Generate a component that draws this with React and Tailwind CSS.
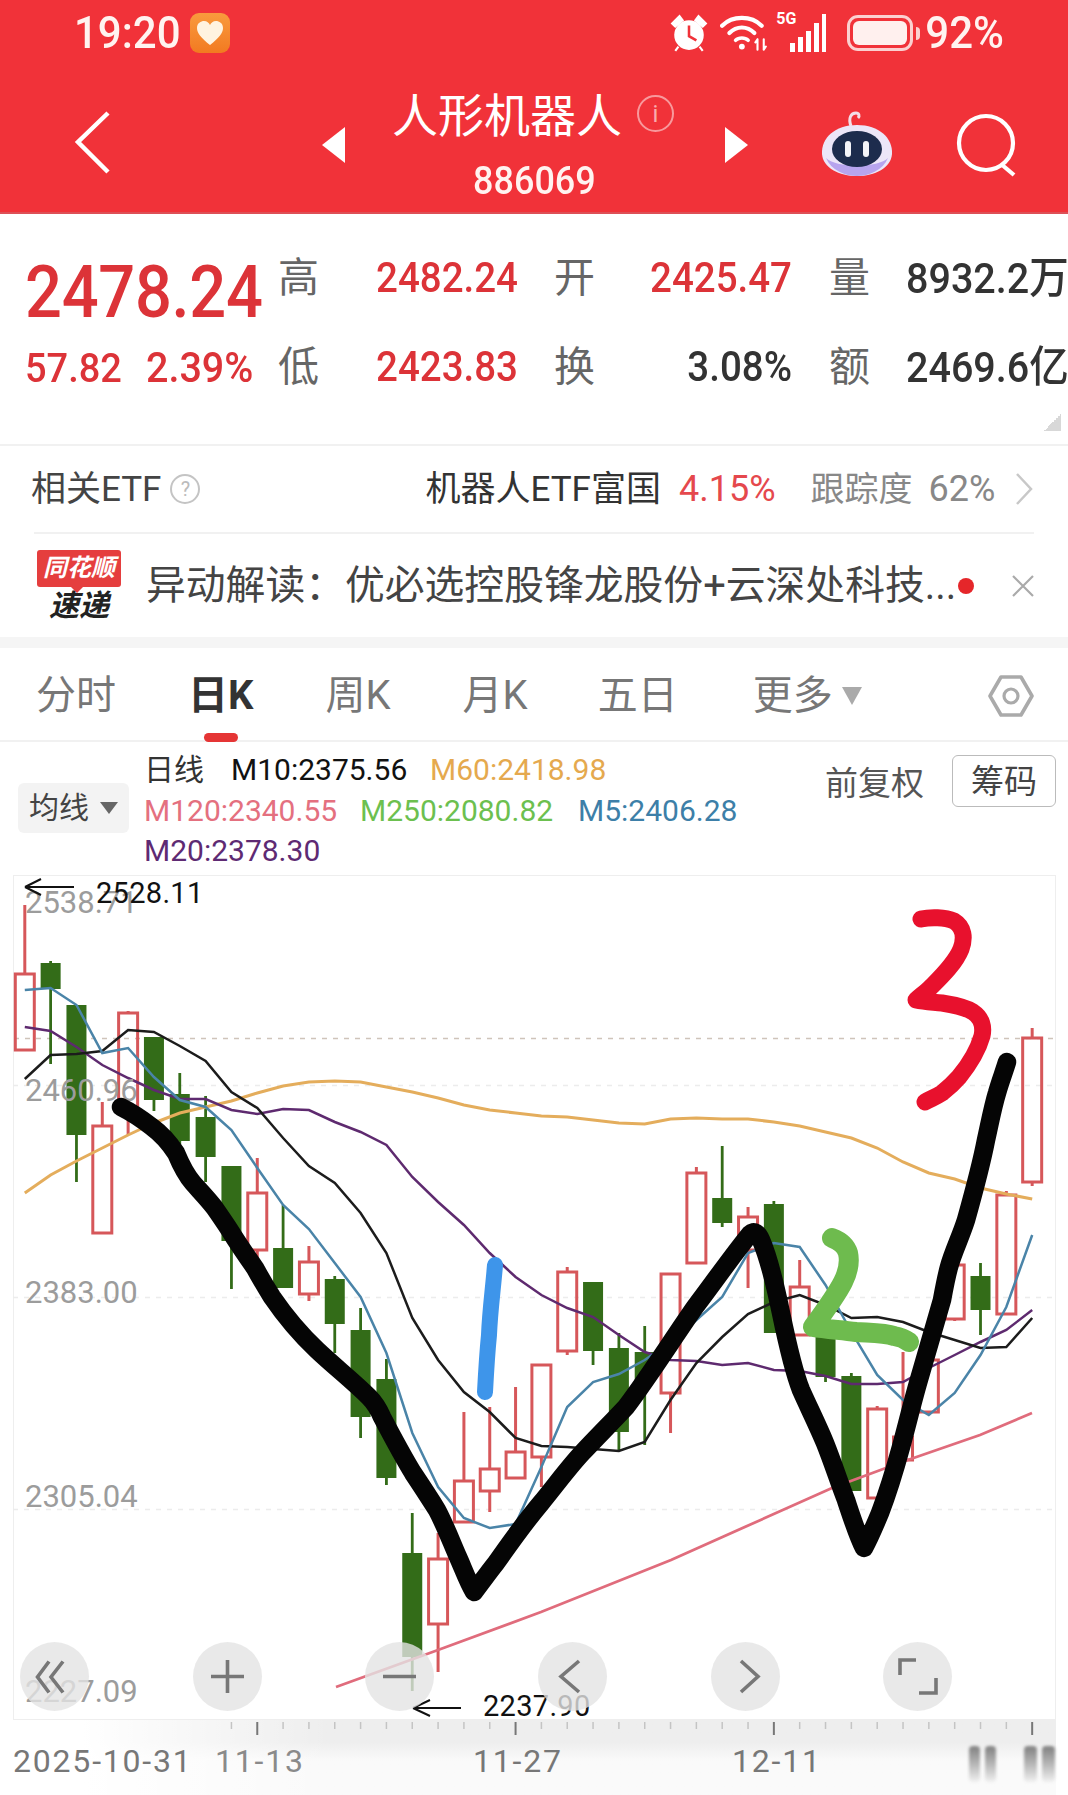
import React from "react";

const X = (i) => 24.8 + 25.83 * i;

// type, bodyTop, bodyBottom, wickTop, wickBottom
const candles = [
  ["r", 974, 1050, 905, 1050],
  ["g", 963, 989, 961, 1064],
  ["g", 1005, 1135, 1005, 1182],
  ["r", 1126, 1233, 1102, 1233],
  ["r", 1013, 1108, 1011, 1135],
  ["g", 1037, 1100, 1037, 1111],
  ["g", 1094, 1141, 1073, 1148],
  ["g", 1117, 1157, 1096, 1182],
  ["g", 1166, 1241, 1166, 1289],
  ["r", 1193, 1250, 1158, 1260],
  ["g", 1248, 1288, 1205, 1288],
  ["r", 1262, 1294, 1246, 1301],
  ["g", 1279, 1324, 1276, 1353],
  ["g", 1330, 1417, 1308, 1438],
  ["g", 1379, 1478, 1359, 1485],
  ["g", 1553, 1657, 1513, 1691],
  ["r", 1559, 1624, 1533, 1672],
  ["r", 1481, 1522, 1412, 1522],
  ["r", 1469, 1491, 1407, 1512],
  ["r", 1452, 1478, 1387, 1478],
  ["r", 1365, 1457, 1365, 1487],
  ["r", 1272, 1351, 1267, 1355],
  ["g", 1282, 1351, 1282, 1365],
  ["g", 1348, 1432, 1333, 1450],
  ["g", 1352, 1382, 1326, 1445],
  ["r", 1274, 1393, 1274, 1433],
  ["r", 1173, 1263, 1167, 1263],
  ["g", 1198, 1223, 1146, 1227],
  ["r", 1217, 1250, 1207, 1288],
  ["g", 1204, 1333, 1201, 1333],
  ["r", 1287, 1335, 1260, 1335],
  ["g", 1320, 1377, 1320, 1382],
  ["g", 1376, 1491, 1373, 1491],
  ["r", 1409, 1498, 1406, 1498],
  ["r", 1437, 1460, 1352, 1460],
  ["r", 1360, 1412, 1360, 1414],
  ["r", 1265, 1319, 1265, 1321],
  ["g", 1276, 1310, 1263, 1335],
  ["r", 1195, 1314, 1191, 1314],
  ["r", 1038, 1182, 1028, 1186],
];

const ma5 = [990, 988, 1005, 1053, 1048, 1077, 1100, 1107, 1130, 1168, 1205, 1229, 1263, 1297, 1353, 1433, 1487, 1518, 1528, 1524, 1467, 1407, 1382, 1374, 1360, 1342, 1320, 1297, 1253, 1243, 1247, 1285, 1332, 1375, 1400, 1415, 1393, 1355, 1307, 1235];
const ma10 = [1079, 1055, 1054, 1051, 1030, 1032, 1046, 1061, 1092, 1108, 1138, 1166, 1183, 1213, 1253, 1318, 1360, 1392, 1412, 1438, 1446, 1447, 1449, 1451, 1442, 1400, 1363, 1337, 1314, 1302, 1295, 1305, 1318, 1317, 1322, 1332, 1340, 1348, 1347, 1318];
const ma20 = [1027, 1031, 1047, 1065, 1078, 1090, 1099, 1099, 1110, 1114, 1109, 1110, 1122, 1132, 1145, 1177, 1202, 1225, 1253, 1277, 1295, 1308, 1317, 1335, 1352, 1360, 1361, 1365, 1363, 1370, 1371, 1376, 1384, 1384, 1382, 1368, 1355, 1342, 1330, 1310];
const ma60 = [1193, 1175, 1161, 1148, 1135, 1123, 1113, 1107, 1101, 1093, 1086, 1082, 1081, 1082, 1087, 1092, 1098, 1105, 1110, 1113, 1116, 1117, 1120, 1123, 1124, 1119, 1118, 1119, 1119, 1122, 1126, 1132, 1138, 1148, 1162, 1173, 1179, 1188, 1194, 1199];

const line = (arr) => arr.map((y, i) => `${X(i).toFixed(1)},${y}`).join(" ");

const Candles = () => (
  <svg className="absolute inset-0 w-full h-full" viewBox="0 875 1068 845">
    <line x1="13" x2="1056" y1="1085.5" y2="1085.5" stroke="#ececec" strokeWidth="1.5" strokeDasharray="5 6" />
    <line x1="13" x2="1056" y1="1297.5" y2="1297.5" stroke="#ececec" strokeWidth="1.5" strokeDasharray="5 6" />
    <line x1="13" x2="1056" y1="1509.5" y2="1509.5" stroke="#ececec" strokeWidth="1.5" strokeDasharray="5 6" />
    <line x1="14" x2="1056" y1="1038.5" y2="1038.5" stroke="#cfc4ba" strokeWidth="1.6" strokeDasharray="5 6" />
    {candles.map(([t, a, b, c, d], i) => {
      const x = X(i);
      if (t === "g") {
        return (
          <g key={i}>
            <line x1={x} x2={x} y1={c} y2={d} stroke="#336c18" strokeWidth="2.8" />
            <rect x={x - 10} y={a} width="20" height={b - a} fill="#336c18" />
          </g>
        );
      }
      return (
        <g key={i}>
          <line x1={x} x2={x} y1={c} y2={a} stroke="#d6575a" strokeWidth="3" />
          <line x1={x} x2={x} y1={b} y2={d} stroke="#d6575a" strokeWidth="3" />
          <rect x={x - 9.5} y={a} width="19" height={b - a} fill="none" stroke="#d6575a" strokeWidth="3" />
        </g>
      );
    })}
    <polyline points="336,1687 438,1650 541,1612 671,1560 832,1488 902,1462 980,1435 1032,1413" fill="none" stroke="#e06c7c" strokeWidth="2.8" />
    <polyline points={line(ma60)} fill="none" stroke="#e4ad5c" strokeWidth="3" />
    <polyline points={line(ma20)} fill="none" stroke="#5e2a6f" strokeWidth="2.5" />
    <polyline points={line(ma10)} fill="none" stroke="#1c1c1c" strokeWidth="2.5" />
    <polyline points={line(ma5)} fill="none" stroke="#4a84a8" strokeWidth="2.5" />
  </svg>
);

const Strokes = () => (
  <svg className="absolute inset-0 w-full h-full" viewBox="0 875 1068 845">
    <path d="M121 1107 C133 1113 143 1120 152 1127 C163 1135 170 1144 176 1153 C181 1165 186 1175 193 1183 C201 1192 207 1198 214 1207 C221 1217 228 1227 234 1237 C241 1248 248 1258 255 1268 C261 1279 267 1289 272 1297 C285 1316 300 1334 317 1350 C335 1367 353 1381 369 1397 C375 1403 379 1410 382 1417 C392 1436 402 1455 413 1473 C421 1485 429 1497 437 1510 C445 1525 451 1541 458 1557 C463 1568 468 1582 474 1592 C481 1583 488 1573 496 1563 C510 1543 525 1522 541 1503 C555 1486 568 1468 582 1453 C597 1437 612 1422 626 1407 C650 1375 672 1340 695 1307 C714 1282 732 1256 750 1234 C754 1230 758 1233 761 1240 C768 1256 775 1284 781 1313 C787 1342 793 1370 801 1390 C809 1408 818 1426 825 1443 C833 1463 839 1482 846 1500 C851 1515 858 1537 864 1548 C870 1537 875 1525 880 1513 C888 1492 895 1469 901 1447 C907 1425 912 1404 918 1383 C926 1355 934 1328 942 1300 C944 1289 946 1278 949 1267 C953 1252 961 1236 966 1220 C973 1195 981 1166 986 1140 C990 1122 993 1106 997 1093 C1000 1082 1004 1072 1007 1062" fill="none" stroke="#050505" strokeWidth="18.5" strokeLinecap="round" strokeLinejoin="round" />
    <path d="M495 1265 C493 1290 490 1310 489 1335 C487 1355 486 1373 485 1392" fill="none" stroke="#3e95ea" strokeWidth="16" strokeLinecap="round" />
    <path d="M921 919 C930 917 945 917 954 921 C964 927 965 938 961 949 C955 964 940 978 930 988 C925 993 920 996 916 1000 C925 1002 933 1002 942 1003 C955 1005 965 1007 973 1012 C982 1018 984 1027 982 1036 C978 1050 968 1066 959 1077 C951 1086 947 1089 942 1093 C936 1097 930 1099 925 1102" fill="none" stroke="#e8112d" strokeWidth="17" strokeLinecap="round" strokeLinejoin="round" />
    <path d="M832 1238 C840 1241 846 1246 848 1253 C850 1262 848 1272 843 1282 C837 1294 824 1312 813 1327 C825 1329 840 1330 856 1332 C870 1333 885 1333 894 1336 C900 1337 905 1339 909 1342" fill="none" stroke="#6ebb4e" strokeWidth="20" strokeLinecap="round" strokeLinejoin="round" />
    <path d="M25 887 H74 M25 887 L41 879 M25 887 L41 895" fill="none" stroke="#111" strokeWidth="2" />
    <path d="M413 1708 H461 M413 1708 L430 1700 M413 1708 L430 1716" fill="none" stroke="#111" strokeWidth="2" />
  </svg>
);

const Circle = ({ children }) => (
  <div className="w-[69px] h-[69px] rounded-full bg-[#e4e4e4]/80 shrink-0">
    <svg viewBox="0 0 69 69" className="w-[69px] h-[69px]" fill="none" stroke="#777" strokeWidth="3.6">
      {children}
    </svg>
  </div>
);

const Ticks = () => (
  <svg className="absolute inset-0 w-full h-full" viewBox="0 1720 1068 75">
    {Array.from({ length: 32 }, (_, k) => k + 8).map((i) => {
      const major = (i - 9) % 10 === 0;
      return (
        <line key={i} x1={X(i)} x2={X(i)} y1="1722" y2={major ? 1735 : 1729} stroke={major ? "#777" : "#c4c4c4"} strokeWidth={major ? 2 : 1.5} />
      );
    })}
  </svg>
);

const Wifi = () => (
  <svg width="50" height="38" viewBox="0 0 48 36" fill="none" stroke="#fff" strokeLinecap="round">
    <path d="M2 11 C12 1 30 1 40 11" strokeWidth="4" />
    <path d="M9 18 C16 11 26 11 33 18" strokeWidth="4" />
    <path d="M15 25 C18 22 24 22 27 25" strokeWidth="3.5" />
    <circle cx="21" cy="31" r="2.8" fill="#fff" stroke="none" />
    <path d="M36 24 V34 M42 24 V34 M34 27 L36 24 M44 31 L42 34" strokeWidth="2" />
  </svg>
);

export default function App() {
  return (
    <div className="w-[1068px] h-[1795px] bg-white overflow-hidden font-[Roboto,'Noto_Sans_CJK_SC',sans-serif]">
      {/* Header */}
      <header className="relative h-[214px] bg-[#f13239] border-b-2 border-[#dd5057] text-white">
        <div className="flex items-center h-[66px] pl-[74px] pr-[64px]">
          <span className="text-[42px] leading-none font-medium text-[#fff3f0] scale-y-[1.06]">19:20</span>
          <div className="ml-[9px] w-[40px] h-[40px] rounded-[9px] bg-gradient-to-b from-[#f99a3d] to-[#f27a20] flex items-center justify-center">
            <svg width="28" height="26" viewBox="0 0 28 26">
              <path d="M14 25 C5 18 1 13 1 8 C1 3 5 1 8 1 C11 1 13 3 14 5 C15 3 17 1 20 1 C23 1 27 3 27 8 C27 13 23 18 14 25Z" fill="#fff3e0" />
            </svg>
          </div>
          <div className="ml-auto flex items-center">
            <svg width="38" height="38" viewBox="0 0 36 36">
              <circle cx="18" cy="20" r="14" fill="#fff" />
              <path d="M2 9 L9 2 L12 6 L5 12Z M34 9 L27 2 L24 6 L31 12Z M8 31 L5 35 M28 31 L31 35" fill="#fff" stroke="#fff" strokeWidth="2" />
              <path d="M18 11 V21 L25 25" fill="none" stroke="#f13239" strokeWidth="2.4" />
            </svg>
            <div className="ml-[12px]"><Wifi /></div>
            <div className="relative w-[58px] h-[38px] ml-[6px]">
              <span className="absolute left-0 top-[-3px] text-[16px] leading-none font-bold">5G</span>
              <div className="absolute left-[14px] bottom-0 flex items-end gap-[3px]">
                <div className="w-[5px] h-[9px] bg-white" />
                <div className="w-[5px] h-[15px] bg-white" />
                <div className="w-[5px] h-[21px] bg-white" />
                <div className="w-[5px] h-[29px] bg-white" />
                <div className="w-[4px] h-[38px] bg-white" />
              </div>
            </div>
            <div className="ml-[13px] w-[66px] h-[36px] rounded-[11px] border-[3px] border-[#fbd0d0] bg-[#f13239] p-[3px]">
              <div className="w-full h-full rounded-[6px] bg-[#fff0ee]" />
            </div>
            <div className="ml-[3px] w-[4px] h-[13px] rounded-r bg-[#fbd0d0]" />
            <span className="ml-[5px] text-[42px] leading-none font-medium text-[#fff3f0] scale-y-[1.06]">92%</span>
          </div>
        </div>
        <div className="flex h-[146px]">
          <svg className="ml-[73px] mt-[44px]" width="40" height="66" viewBox="0 0 40 66" fill="none" stroke="#fff" strokeWidth="4.5">
            <path d="M35 3 L5 32 L35 62" />
          </svg>
          <svg className="ml-[209px] mt-[61px]" width="24" height="36" viewBox="0 0 24 36"><path d="M23 0 V36 L0 18Z" fill="#fff" /></svg>
          <div className="ml-[46px] w-[229px] flex flex-col items-start">
            <span className="mt-[20px] text-[46px] leading-[60px] whitespace-nowrap">
              人形机器人
            </span>
            <span className="mt-[13px] ml-[81px] text-[36px] leading-[44px] font-medium text-[#fff3f0] scale-y-[1.1]">886069</span>
          </div>
          <div className="mt-[29px] ml-[16px] w-[37px] h-[37px] rounded-full border-[2.5px] border-white/50 flex items-center justify-center text-[24px] leading-none text-white/60">i</div>
          <svg className="ml-[50px] mt-[61px]" width="24" height="36" viewBox="0 0 24 36"><path d="M1 0 V36 L24 18Z" fill="#fff" /></svg>
          <svg className="ml-[73px] mt-[44px]" width="72" height="68" viewBox="0 0 72 68">
            <path d="M30 16 C27 8 30 3 35 3 C38 3 39 6 37 8" fill="none" stroke="#f3dfe8" strokeWidth="3" />
            <path d="M36 15 C58 15 72 28 71 44 C70 58 54 66 36 66 C18 66 2 58 1 44 C0 28 14 15 36 15Z" fill="#ece6f8" />
            <path d="M5 48 C10 60 24 66 36 66 C48 66 62 60 67 48 C58 58 14 58 5 48Z" fill="#b7a4ee" />
            <ellipse cx="36" cy="39" rx="25" ry="18" fill="#1d2c4d" />
            <rect x="24" y="31" width="6" height="16" rx="3" fill="#f4f4f8" />
            <rect x="42" y="31" width="6" height="16" rx="3" fill="#f4f4f8" />
          </svg>
          <svg className="ml-[63px] mt-[47px]" width="64" height="64" viewBox="0 0 64 64" fill="none" stroke="#fff" strokeWidth="4.2">
            <circle cx="30" cy="30" r="27" />
            <path d="M45 51 L58 62" />
          </svg>
        </div>
      </header>

      {/* Stats */}
      <section className="relative h-[232px] flex border-b-2 border-[#f1f1f1]">
        <div className="w-[278px] shrink-0 pl-[25px]">
          <div className="mt-[41px] text-[65px] leading-[76px] font-medium text-[#dc3338] tracking-[-0.3px] scale-y-[1.1] origin-[100px_38px]">2478.24</div>
          <div className="mt-[15px] flex text-[38px] leading-[44px] font-medium text-[#dc3338] [&>span]:scale-y-[1.08]">
            <span>57.82</span>
            <span className="ml-[24px] text-[39.5px]">2.39%</span>
          </div>
        </div>
        <div className="mt-[20px] grid grid-cols-[41px_199px_77px_197px_78px_1fr] grid-rows-[89px_89px] items-center text-[41px] leading-none whitespace-nowrap">
          <span className="text-[#666]">高</span>
          <span className="text-right text-[#dc3338] text-[38.5px] font-medium scale-y-[1.08] origin-right">2482.24</span>
          <span className="pl-[36px] text-[#666]">开</span>
          <span className="text-right text-[#dc3338] text-[38.5px] font-medium scale-y-[1.08] origin-right">2425.47</span>
          <span className="pl-[37px] text-[#666]">量</span>
          <span className="pl-[36px] text-[#333] text-[39.5px] font-medium scale-y-[1.08] origin-left">8932.2万</span>
          <span className="text-[#666]">低</span>
          <span className="text-right text-[#dc3338] text-[38.5px] font-medium scale-y-[1.08] origin-right">2423.83</span>
          <span className="pl-[36px] text-[#666]">换</span>
          <span className="text-right text-[#333] text-[38.5px] font-medium scale-y-[1.08] origin-right">3.08%</span>
          <span className="pl-[37px] text-[#666]">额</span>
          <span className="pl-[36px] text-[#333] text-[39.5px] font-medium scale-y-[1.08] origin-left">2469.6亿</span>
        </div>
        <div className="absolute right-[7px] bottom-[13px] w-[17px] h-[17px] bg-gradient-to-br from-white from-50% to-[#d8d8d8] to-50%" />
      </section>

      {/* ETF row */}
      <section className="flex items-center h-[86px] pl-[31px] whitespace-nowrap">
        <span className="text-[35px] leading-none text-[#444]">相关ETF</span>
        <div className="ml-[9px] w-[30px] h-[30px] rounded-full border-2 border-[#c4c4c4] flex items-center justify-center text-[20px] leading-none text-[#bbb]">?</div>
        <span className="ml-[225px] text-[35px] leading-none text-[#333]">机器人ETF富国</span>
        <span className="ml-[18px] text-[36px] leading-none text-[#e5484d]">4.15%</span>
        <span className="ml-[35px] text-[34px] leading-none text-[#888]">跟踪度</span>
        <span className="ml-[16px] text-[36px] leading-none text-[#888]">62%</span>
        <svg className="ml-[20px]" width="18" height="32" viewBox="0 0 18 32" fill="none" stroke="#c8c8c8" strokeWidth="2.5"><path d="M2 1 L16 16 L2 31" /></svg>
      </section>

      {/* News */}
      <div className="mx-[34px] h-[2px] bg-[#f1f1f1]" />
      <section className="flex items-center h-[103px] pl-[37px] whitespace-nowrap">
        <div className="w-[84px] h-[72px] shrink-0 flex flex-col items-center">
          <div className="relative w-[84px] h-[37px] rounded-[3px] bg-[#e53e3e] flex items-center justify-center text-white text-[24px] leading-none font-bold italic">
            同花顺
            <div className="absolute left-[34px] bottom-[-6px] border-x-[6px] border-x-transparent border-t-[6px] border-t-[#e53e3e]" />
          </div>
          <div className="mt-[4px] text-[30px] leading-none font-bold italic text-[#222]">速递</div>
        </div>
        <span className="ml-[25px] text-[39.8px] leading-none text-[#444]">异动解读：优必选控股锋龙股份+云深处科技...</span>
        <div className="ml-[2px] w-[16px] h-[16px] rounded-full bg-[#e5262a]" />
        <svg className="ml-[38px]" width="22" height="22" viewBox="0 0 22 22" stroke="#aaa" strokeWidth="2.2"><path d="M1 1 L21 21 M21 1 L1 21" /></svg>
      </section>
      <div className="h-[11px] bg-[#f5f5f5]" />

      {/* Tabs */}
      <section className="relative flex items-center h-[94px] pt-[3px] border-b-2 border-[#f1f1f1] text-[40px] leading-none text-[#777] whitespace-nowrap">
        <span className="ml-[36px]">分时</span>
        <span className="ml-[72px] font-bold text-[#333]">日K</span>
        <span className="ml-[72px]">周K</span>
        <span className="ml-[72px]">月K</span>
        <span className="ml-[70px]">五日</span>
        <span className="ml-[75px]">更多</span>
        <svg className="ml-[9px]" width="20" height="18" viewBox="0 0 20 18"><path d="M0 0 H20 L10 18Z" fill="#aaa" /></svg>
        <svg className="ml-[126px]" width="46" height="44" viewBox="0 0 46 44" fill="none" stroke="#aaa">
          <path d="M13 3 H33 L44 22 L33 41 H13 L2 22Z" strokeWidth="3.6" strokeLinejoin="round" />
          <circle cx="23" cy="22" r="7" strokeWidth="3.2" />
        </svg>
        <div className="absolute left-[204px] bottom-[-2px] w-[34px] h-[9px] rounded-[5px] bg-[#e53535]" />
      </section>

      {/* Legend */}
      <section className="relative flex h-[133px] whitespace-nowrap">
        <div className="ml-[18px] mt-[41px] w-[111px] h-[50px] rounded-[6px] bg-[#f3f3f3] flex items-center pl-[11px] text-[30px] leading-none text-[#444]">
          均线
          <svg className="ml-[11px]" width="18" height="12" viewBox="0 0 18 12"><path d="M0 0 H18 L9 12Z" fill="#666" /></svg>
        </div>
        <div className="ml-[15px] mt-[8px] text-[30px] leading-[40.5px]">
          <div className="flex">
            <span className="w-[87px] text-[#333]">日线</span>
            <span className="w-[199px] text-[#111]">M10:2375.56</span>
            <span className="text-[#e5a94e]">M60:2418.98</span>
          </div>
          <div className="flex">
            <span className="w-[216px] text-[#e4707f]">M120:2340.55</span>
            <span className="w-[218px] text-[#6cc04f]">M250:2080.82</span>
            <span className="text-[#3d7fa8]">M5:2406.28</span>
          </div>
          <div className="text-[#5e2a73]">M20:2378.30</div>
        </div>
        <span className="absolute left-[825px] top-[21px] text-[33px] leading-[42px] text-[#555]">前复权</span>
        <div className="absolute left-[952px] top-[13px] w-[104px] h-[52px] rounded-[6px] border-[1.5px] border-[#bbb] flex items-center justify-center text-[33px] leading-none text-[#444]">筹码</div>
      </section>

      {/* Chart */}
      <section className="relative h-[845px]">
        <div className="ml-[13px] w-[1043px] h-[845px] border border-[#eeeeee]" />
        <Candles />
        <span className="absolute left-[25px] top-[9px] text-[31px] leading-[38px] text-[#9c9c9c]">2538.71</span>
        <span className="absolute left-[25px] top-[197px] text-[31px] leading-[38px] text-[#9c9c9c]">2460.96</span>
        <span className="absolute left-[25px] top-[399px] text-[31px] leading-[38px] text-[#9c9c9c]">2383.00</span>
        <span className="absolute left-[25px] top-[603px] text-[31px] leading-[38px] text-[#9c9c9c]">2305.04</span>
        <span className="absolute left-[25px] top-[798px] text-[31px] leading-[38px] text-[#9c9c9c]">2227.09</span>
        <Strokes />
        <span className="absolute left-[96px] top-[0px] text-[29px] leading-[36px] tracking-[0.3px] text-[#111]">2528.11</span>
        <span className="absolute left-[483px] top-[813px] text-[29px] leading-[36px] tracking-[0.3px] text-[#111]">2237.90</span>
        <div className="absolute left-[20px] top-[767px] flex gap-[103.7px]">
          <Circle><path d="M29 19.5 L17.5 35 L29 50.5 M43 19.5 L31 35 L43 50.5" /></Circle>
          <Circle><path d="M18 34.5 H51 M34.5 18 V51" /></Circle>
          <Circle><path d="M18 34.5 H51" /></Circle>
          <Circle><path d="M41 19 L23 34.5 L41 50" /></Circle>
          <Circle><path d="M30 19 L47 34.5 L30 50" /></Circle>
          <Circle><path d="M33 18 H17 V33 M53 36 V51 H36" /></Circle>
        </div>
      </section>

      {/* Time axis */}
      <section className="relative h-[75px] bg-gradient-to-b from-[#eeeeee] from-30% to-[#fafafa] to-55%">
        <div className="absolute inset-y-0 left-0 w-[330px] bg-gradient-to-r from-white from-25% to-white/0" />
        <div className="absolute inset-y-0 right-0 w-[12px] bg-white" />
        <Ticks />
        <div className="relative flex items-center h-full pt-[6px] text-[32px] leading-none tracking-[1.8px] text-[#777] whitespace-nowrap">
          <span className="ml-[13px] w-[202px]">2025-10-31</span>
          <span className="w-[258px] text-[#8a8a8a]">11-13</span>
          <span className="w-[259px]">11-27</span>
          <span className="w-[237px]">12-11</span>
          <div className="flex h-[36px] mt-[6px]">
            <div className="w-[11px] h-full rounded-[4px] bg-gradient-to-b from-[#808080] to-[#f0f0f0] blur-[1.5px]" />
            <div className="ml-[5px] w-[11px] h-full rounded-[4px] bg-gradient-to-b from-[#808080] to-[#f0f0f0] blur-[1.5px]" />
            <div className="ml-[28px] w-[13px] h-full rounded-[4px] bg-gradient-to-b from-[#808080] to-[#f0f0f0] blur-[1.5px]" />
            <div className="ml-[5px] w-[13px] h-full rounded-[4px] bg-gradient-to-b from-[#808080] to-[#f0f0f0] blur-[1.5px]" />
          </div>
        </div>
      </section>
    </div>
  );
}
